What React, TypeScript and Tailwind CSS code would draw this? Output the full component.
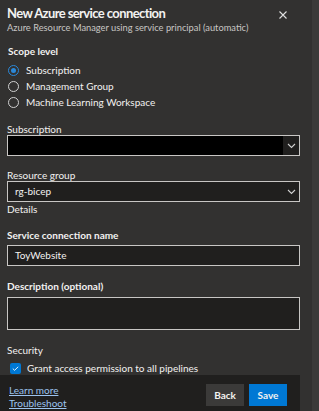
import React from "react";

function Radio({ checked, label }: { checked?: boolean; label: string }) {
  return (
    <div className="flex items-center h-[16px]">
      <div
        className={
          "w-[11px] h-[11px] rounded-full border flex items-center justify-center ml-[1px] " +
          (checked ? "border-[#2b88d8]" : "border-[#d0d0d0]")
        }
      >
        {checked && <div className="w-[5px] h-[5px] rounded-full bg-[#2b88d8]" />}
      </div>
      <span className="ml-[7px] text-[10px] text-[#f3f2f1]">{label}</span>
    </div>
  );
}

function Chevron() {
  return (
    <svg width="9" height="6" viewBox="0 0 9 6" fill="none">
      <path d="M1 1l3.5 3.5L8 1" stroke="#d0d0d0" strokeWidth="1.1" />
    </svg>
  );
}

export default function App() {
  return (
    <div
      className="w-[319px] h-[411px] bg-[#323130] flex overflow-hidden text-[#f3f2f1]"
      style={{ fontFamily: 'Lato, "Liberation Sans", sans-serif' }}
    >
      <div className="w-[312px] flex flex-col">
        <div className="h-[375px] pl-[7px] pr-[12px] overflow-hidden">
          <div className="flex justify-between items-start pt-[4px]">
            <div className="whitespace-nowrap">
              <div className="text-[13px] font-bold leading-[18px] tracking-[-0.6px]">New Azure service connection</div>
              <div className="text-[9.3px] text-[#c8c6c4] leading-[12px]">
                Azure Resource Manager using service principal (automatic)
              </div>
            </div>
            <div className="mt-[7px] mr-[13px]">
              <svg width="8" height="8" viewBox="0 0 8 8">
                <path d="M0.5 0.5l7 7M7.5 0.5l-7 7" stroke="#e0e0e0" strokeWidth="1.1" />
              </svg>
            </div>
          </div>
          <div className="text-[10px] font-bold mt-[10px] leading-[14px] pl-[1px]">Scope level</div>
          <div className="mt-[4px] flex flex-col">
            <Radio checked label="Subscription" />
            <Radio label="Management Group" />
            <Radio label="Machine Learning Workspace" />
          </div>

          <div className="text-[10px] mt-[14px] leading-[11px]">Subscription</div>
          <div className="h-[21px] w-[293px] border border-[#c8c6c4] flex items-stretch">
            <div className="flex-1 bg-black" />
            <div className="w-[16px] bg-[#201f1e] flex items-center justify-center">
              <Chevron />
            </div>
          </div>

          <div className="text-[10px] mt-[14px] leading-[11px]">Resource group</div>
          <div className="h-[21px] w-[293px] border border-[#c8c6c4] bg-[#201f1e] flex items-center">
            <span className="flex-1 text-[10px] pl-[7px]">rg-bicep</span>
            <div className="w-[16px] flex items-center justify-center">
              <Chevron />
            </div>
          </div>
          <div className="text-[10px] leading-[12px] mt-[1px]">Details</div>

          <div className="text-[10px] font-bold mt-[14px] leading-[12px]">Service connection name</div>
          <div className="h-[21px] w-[293px] border border-[#c8c6c4] bg-[#201f1e] flex items-center mt-[4px]">
            <span className="text-[10px] pl-[7px]">ToyWebsite</span>
          </div>

          <div className="text-[10px] font-bold mt-[14px] leading-[12px]">Description (optional)</div>
          <div className="h-[33px] w-[293px] border border-[#c8c6c4] bg-[#201f1e] mt-[5px]" />

          <div className="text-[10px] mt-[14px] leading-[12px]">Security</div>
          <div className="flex items-center mt-[5px] h-[14px]">
            <div className="w-[11px] h-[11px] rounded-[2px] bg-[#0078d4] flex items-center justify-center ml-[3px]">
              <svg width="7" height="5" viewBox="0 0 7 5">
                <path d="M0.8 2.6l1.8 1.7L6.2 0.8" stroke="white" strokeWidth="0.9" fill="none" />
              </svg>
            </div>
            <span className="ml-[6px] text-[10px]">Grant access permission to all pipelines</span>
          </div>
        </div>
        <div className="w-[300px] h-[36px] bg-[#201f1e] flex items-start justify-between pl-[9px] pr-[13px] pt-[9px]">
          <div className="flex flex-col text-[10px] leading-[13px] text-[#9cc3ee]">
            <span className="underline">Learn more</span>
            <span className="underline">Troubleshoot</span>
          </div>
          <div className="flex gap-[5px]">
            <div className="w-[38px] h-[22px] bg-[#3b3a39] flex items-center justify-center text-[10px] font-bold">Back</div>
            <div className="w-[38px] h-[22px] bg-[#0078d4] flex items-center justify-center text-[10px] font-bold">Save</div>
          </div>
        </div>
      </div>
      <div className="flex-1 bg-[#3b3a39]" />
    </div>
  );
}
